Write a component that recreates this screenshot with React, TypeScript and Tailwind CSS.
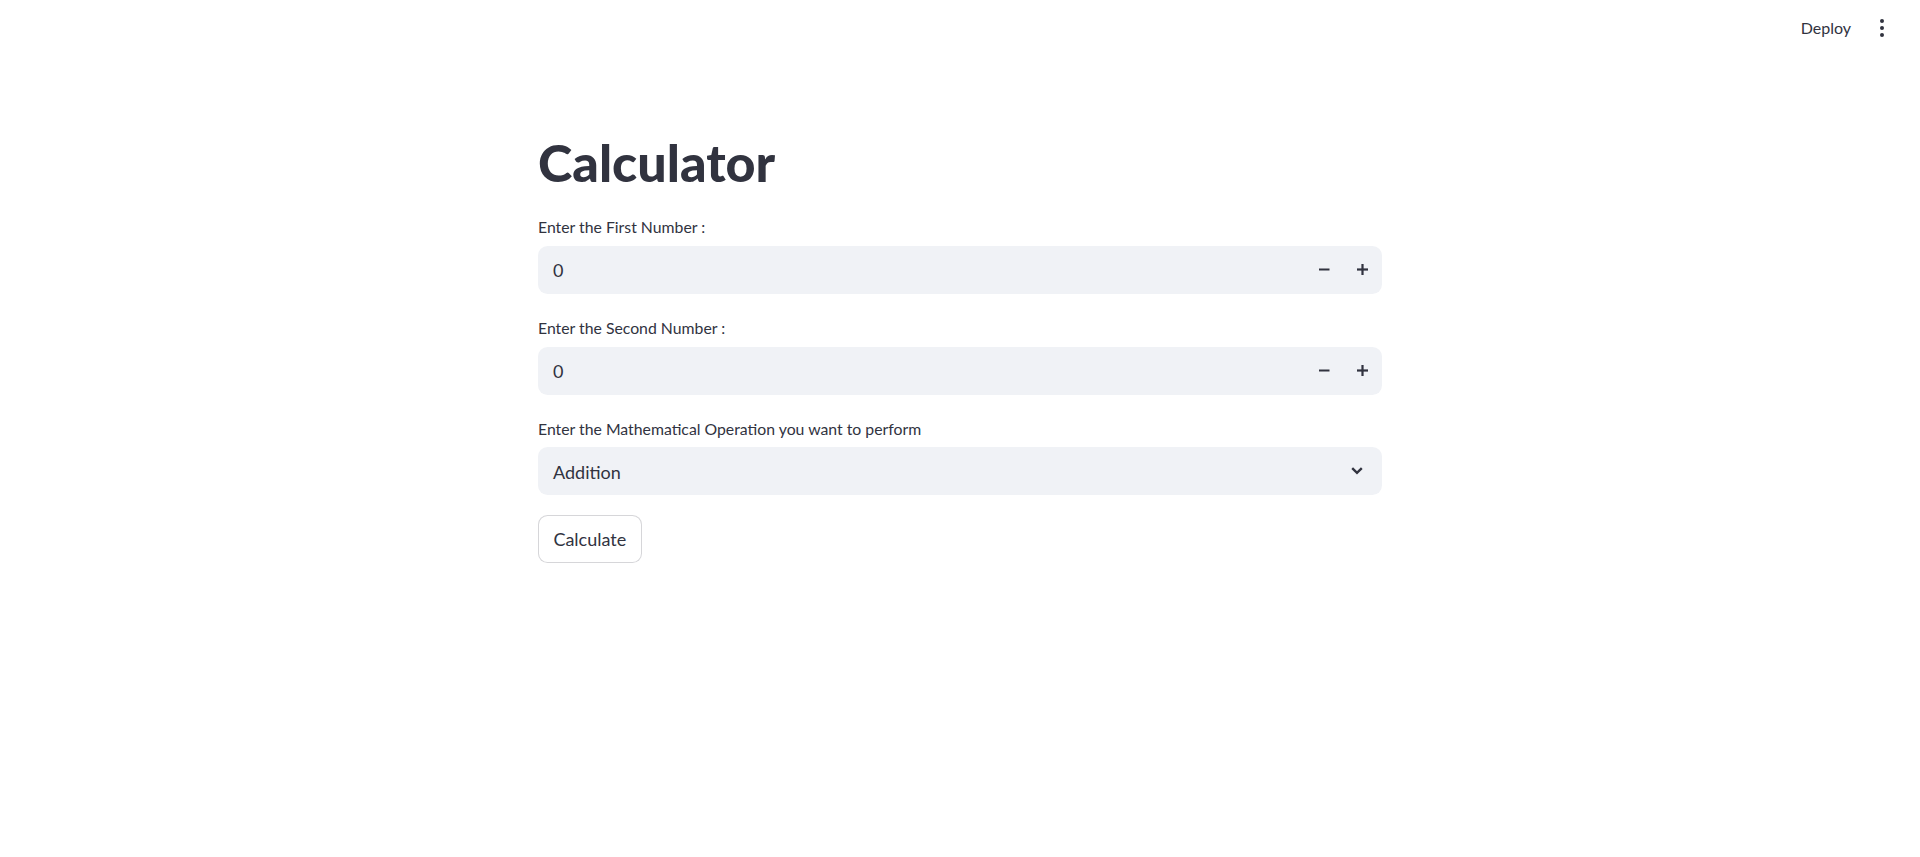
import React from "react";

const font = { fontFamily: "Lato, 'Noto Sans', sans-serif" };

function NumberInput({ label }: { label: string }) {
  return (
    <div className="flex flex-col">
      <div className="text-[15.8px] leading-[28.8px] pt-[1px] mb-[3.8px] text-[#31333F]">{label}</div>
      <div className="h-[48px] w-full rounded-[9.6px] bg-[#F0F2F6] flex items-center">
        <div className="flex-1 pl-[15px] pt-[2px] text-[18px] text-[#31333F]">0</div>
        <div className="w-[38.4px] h-full flex items-center justify-center">
          <svg width="11" height="11" viewBox="0 0 11 11">
            <rect x="0" y="4.5" width="10.5" height="2" fill="#31333F" />
          </svg>
        </div>
        <div className="w-[38.4px] h-full flex items-center justify-center">
          <svg width="11" height="11" viewBox="0 0 11 11">
            <rect x="0" y="4.4" width="11" height="2.2" fill="#31333F" />
            <rect x="4.4" y="0" width="2.2" height="11" fill="#31333F" />
          </svg>
        </div>
      </div>
    </div>
  );
}

export default function App() {
  return (
    <div className="min-h-screen bg-white text-[#31333F]" style={font}>
      <div className="h-[55px] flex items-center justify-end pr-[26px] gap-[19px]">
        <span className="text-[16px] text-[#31333F]">Deploy</span>
        <svg width="24" height="24" viewBox="0 0 24 24">
          <circle cx="12" cy="5" r="2" fill="#31333F" />
          <circle cx="12" cy="12" r="2" fill="#31333F" />
          <circle cx="12" cy="19" r="2" fill="#31333F" />
        </svg>
      </div>
      <div className="w-[844px] mx-auto pt-[76px] flex flex-col gap-[19.2px]">
        <h1 className="text-[52px] leading-[62px] font-black text-[#31333F]">Calculator</h1>
        <NumberInput label="Enter the First Number :" />
        <NumberInput label="Enter the Second Number :" />
        <div className="flex flex-col">
          <div className="text-[15.8px] leading-[28.8px] pt-[1px] mb-[3.8px] text-[#31333F]">
            Enter the Mathematical Operation you want to perform
          </div>
          <div className="h-[48px] w-full rounded-[9.6px] bg-[#F0F2F6] flex items-center justify-between pl-[15px] pr-[19px]">
            <span className="text-[18px] pt-[2px] text-[#31333F]">Addition</span>
            <svg width="12" height="8" viewBox="0 0 12 8">
              <path d="M1.2 1.2 L6 5.8 L10.8 1.2" fill="none" stroke="#31333F" strokeWidth="2.4" />
            </svg>
          </div>
        </div>
        <div>
          <button className="h-[48px] px-[14.4px] pt-[2px] rounded-[9.6px] border border-[rgba(49,51,63,0.2)] bg-white text-[18px] text-[#31333F]">
            Calculate
          </button>
        </div>
      </div>
    </div>
  );
}
